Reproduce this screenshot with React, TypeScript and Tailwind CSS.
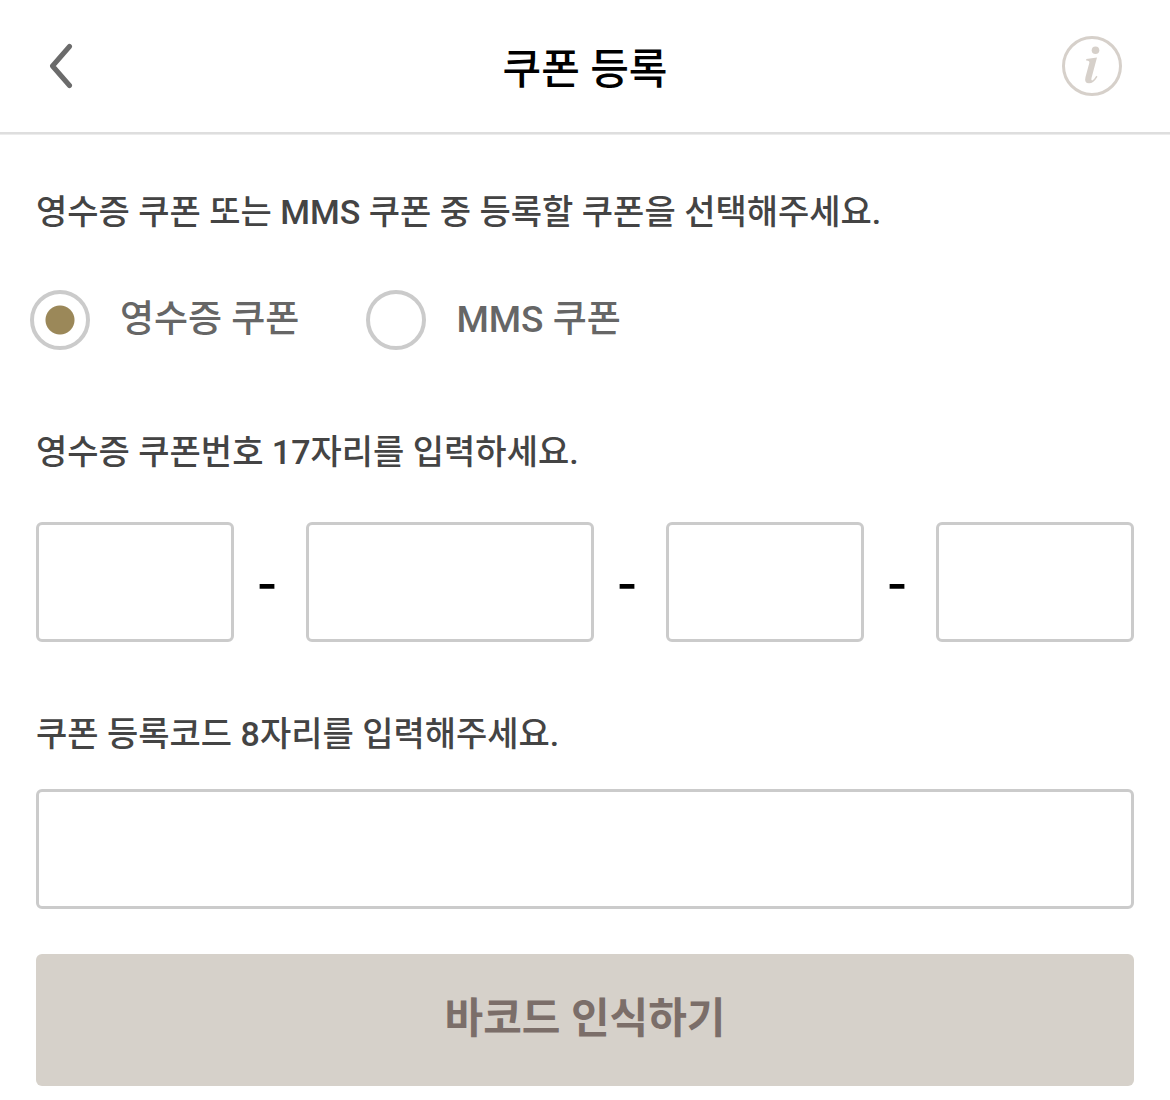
import { useState } from "react";

const groups = [
  { id: "a", label: "쿠폰번호 첫 번째 자리", grow: "w-[198px] shrink grow" },
  { id: "b", label: "쿠폰번호 두 번째 자리", grow: "w-[288px] shrink grow" },
  { id: "c", label: "쿠폰번호 세 번째 자리", grow: "w-[198px] shrink grow" },
  { id: "d", label: "쿠폰번호 네 번째 자리", grow: "w-[198px] shrink grow" },
];

const kinds = ["영수증 쿠폰", "MMS 쿠폰"];

const box = "h-[120px] rounded-md border-3 border-[#cbcbcb] bg-white px-4 text-4xl outline-none";

export default function App() {
  const [kind, setKind] = useState(kinds[0]);
  return (
    <div className="min-h-screen bg-white pb-3 font-['Roboto','Noto_Sans_CJK_KR',sans-serif] font-medium text-[#444]">
      <header className="flex h-[134px] items-center justify-between border-b-2 border-[#dedede] px-12 shadow-[0_1px_0_#ececec]">
        <button type="button" aria-label="뒤로" className="w-[60px]">
          <svg width="26" height="46" viewBox="0 0 26 46" fill="none" stroke="#6b6b6b" strokeWidth="5" strokeLinecap="round" strokeLinejoin="round">
            <path d="M21.500 3.500 4.500 23l17 19.500" />
          </svg>
        </button>
        <h1 className="pt-2 text-[42px] leading-[60px] text-black">쿠폰 등록</h1>
        <button type="button" aria-label="안내" className="w-[60px]">
          <svg width="60" height="60" viewBox="0 0 60 60">
            <circle cx="30" cy="30" r="28.5" fill="none" stroke="#d6d0ca" strokeWidth="3" />
            <circle cx="33.500" cy="14.200" r="3.800" fill="#d6d0ca" />
            <path d="M24.300 23 35 21.500 29.500 42q-.6 2.800.8 2.400 2-1 4-4.600l1.200.9q-4 6.600-8.500 6.600-5 0-3.500-6.300l3.800-14q.7-2.700-3.200-2.600Z" fill="#d6d0ca" />
          </svg>
        </button>
      </header>
      <main className="px-9">
        <h2 className="pt-[50px] text-[34px] leading-[56px]">영수증 쿠폰 또는 MMS 쿠폰 중 등록할 쿠폰을 선택해주세요.</h2>
        <div className="-ml-1.5 mt-[50px] flex gap-[67px] text-[37px] leading-[60px] text-[#666]">
          {kinds.map((name) => (
            <label key={name} className="flex items-center gap-[30px]">
              <input
                type="radio"
                name="kind"
                checked={kind === name}
                onChange={() => setKind(name)}
                className="size-[60px] appearance-none rounded-full border-4 border-[#cbcbcb] bg-white checked:bg-[radial-gradient(circle,#9b8859_14px,transparent_15px)]"
              />
              <span>{name}</span>
            </label>
          ))}
        </div>
        <h2 className="mt-[74px] text-[34px] leading-[56px]">영수증 쿠폰번호 17자리를 입력하세요.</h2>
        <div className="mt-[42px] flex items-center">
          {groups.map((g, i) => (
            <div key={g.id} className="contents">
              {i > 0 && <span className="w-[72px] shrink-0 pr-1.5 pb-2 text-center font-['Noto_Sans_CJK_KR',sans-serif] text-[56px] leading-[60px] text-black">-</span>}
              <input aria-label={g.label} className={`min-w-0 ${g.grow} ${box}`} />
            </div>
          ))}
        </div>
        <label className="mt-16 block text-[34px] leading-[56px]">
          쿠폰 등록코드 8자리를 입력해주세요.
          <input className={`mt-[27px] block w-full ${box}`} />
        </label>
        <button type="button" className="mt-[45px] h-[132px] w-full rounded-md bg-[#d6d1ca] pb-1 text-[42px] font-bold text-[#7b6e69]">
          바코드 인식하기
        </button>
      </main>
    </div>
  );
}
